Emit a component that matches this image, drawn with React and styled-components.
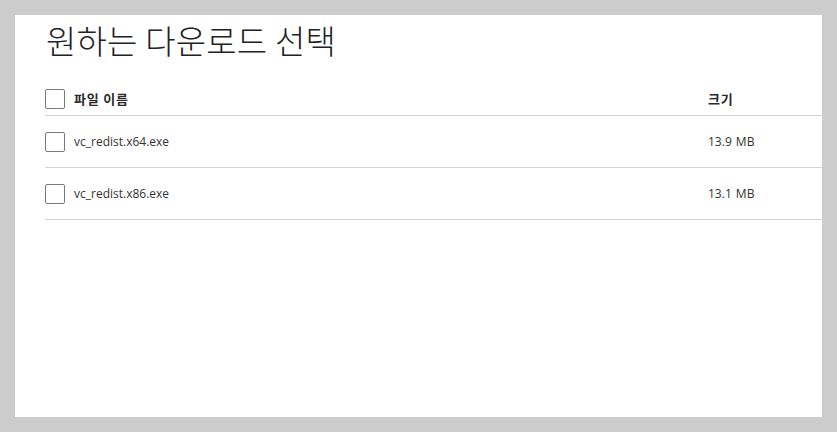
import React from "react";
import styled, { createGlobalStyle } from "styled-components";

const Global = createGlobalStyle`
  html, body { margin: 0; padding: 0; background: #cccccc; }
  body { font-family: "Noto Sans CJK KR", "Noto Sans", sans-serif; }
`;

const Page = styled.div`
  padding: 15px;
  box-sizing: border-box;
  height: 432px;
`;

const Panel = styled.div`
  background: #ffffff;
  height: 402px;
  box-sizing: border-box;
  padding: 3px 0 0 30px;
`;

const Title = styled.h1`
  margin: 0 0 0 1px;
  font-family: "Noto Sans CJK KR", sans-serif;
  font-weight: 300;
  font-size: 33px;
  line-height: 44px;
  color: #222222;
  letter-spacing: 0.2px;
`;

const Table = styled.div`
  margin-top: 20px;
  display: flex;
  flex-direction: column;
`;

const Row = styled.div`
  display: flex;
  align-items: center;
  height: ${(p) => (p.$header ? "33px" : "51px")};
  border-bottom: 1px solid #d4d4d4;
  color: #333333;
`;

const NameCell = styled.div`
  display: flex;
  align-items: center;
  gap: 9px;
  width: 663px;
`;

const Box = styled.span`
  width: 20px;
  height: 20px;
  box-sizing: border-box;
  border: 1px solid #7a7a7a;
  border-radius: 2px;
  background: #fff;
  flex: none;
`;

const Label = styled.span`
  font-family: ${(p) =>
    p.$header ? '"Noto Sans CJK KR", sans-serif' : '"Open Sans", "Noto Sans CJK KR", sans-serif'};
  font-size: ${(p) => (p.$header ? "13px" : "12px")};
  font-weight: ${(p) => (p.$header ? 700 : 400)};
  letter-spacing: ${(p) => (p.$header ? "0.8px" : "0")};
  word-spacing: ${(p) => (p.$header ? "0" : "1px")};
  color: ${(p) => (p.$header ? "#2a2a2a" : "#333")};
`;

const files = [
  { name: "vc_redist.x64.exe", size: "13.9 MB" },
  { name: "vc_redist.x86.exe", size: "13.1 MB" },
];

export default function App() {
  return (
    <>
      <Global />
      <Page>
        <Panel>
          <Title>원하는 다운로드 선택</Title>
          <Table>
            <Row $header>
              <NameCell>
                <Box />
                <Label $header>파일 이름</Label>
              </NameCell>
              <Label $header>크기</Label>
            </Row>
            {files.map((f) => (
              <Row key={f.name}>
                <NameCell>
                  <Box />
                  <Label>{f.name}</Label>
                </NameCell>
                <Label>{f.size}</Label>
              </Row>
            ))}
          </Table>
        </Panel>
      </Page>
    </>
  );
}
